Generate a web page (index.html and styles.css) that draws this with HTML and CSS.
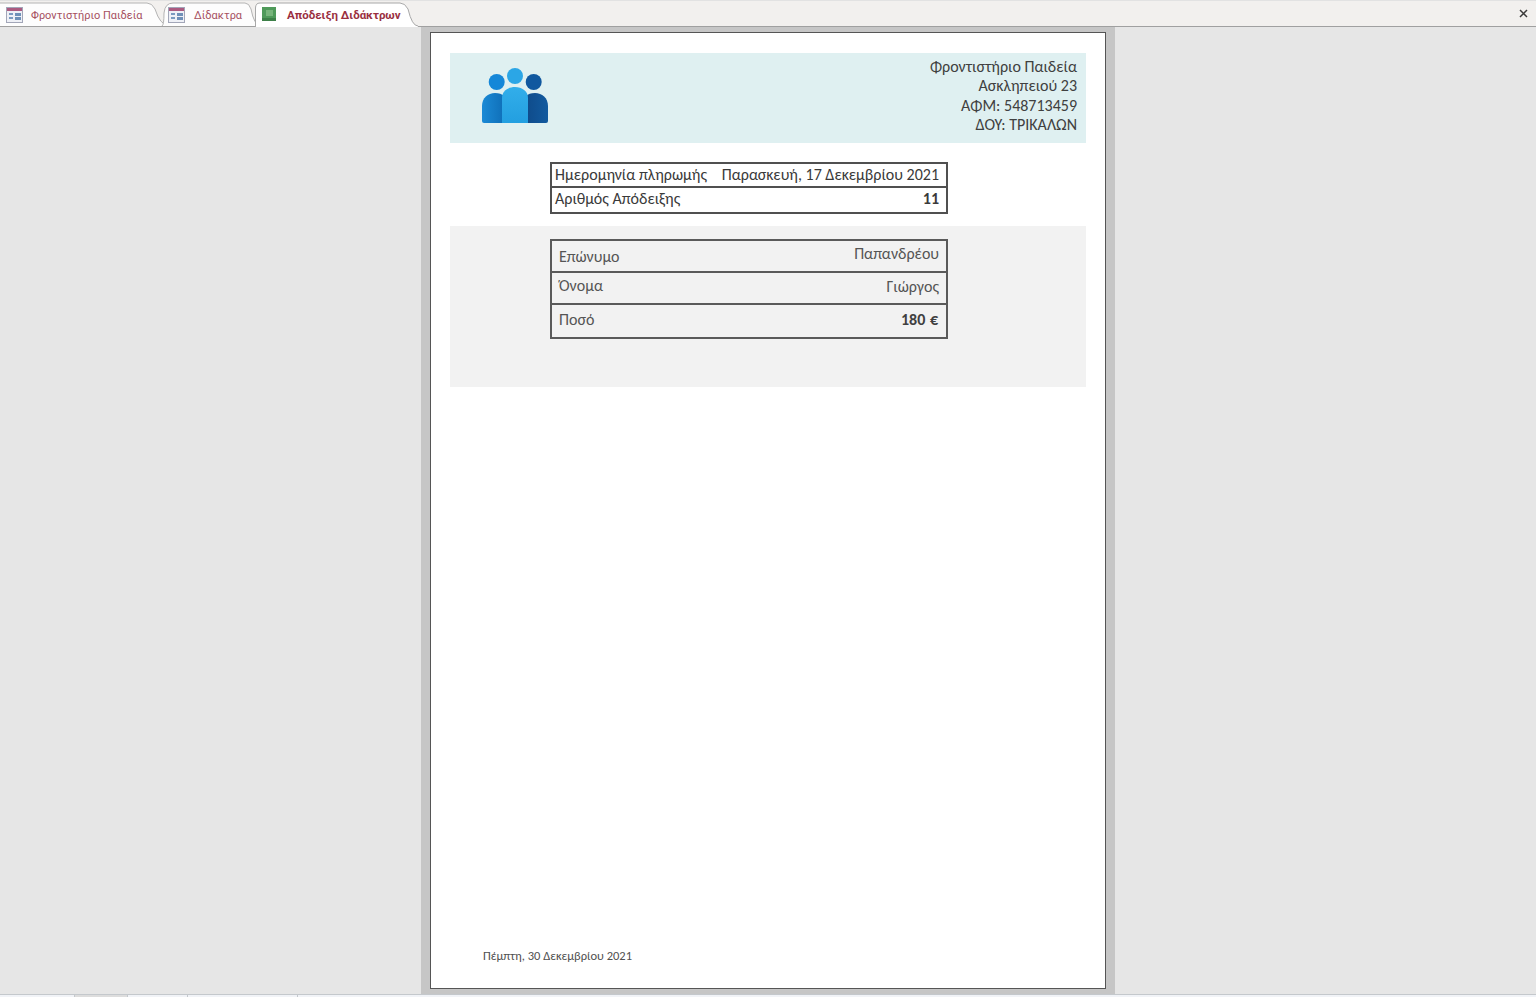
FILE: index.html
```html
<!DOCTYPE html>
<html lang="el">
<head>
    <meta charset="UTF-8">
    <title>Απόδειξη Διδάκτρων</title>
    <link rel="stylesheet" href="styles.css">
</head>
<body>
    <div class="tabbar">
        <div class="tab">
            <svg class="tab-shape" viewBox="0 0 164 25"><path d="M0 25V2H147Q152 2 155 8Q160 24 168 24V25Z" fill="#fdfdfd"/><path d="M0 2H147Q152 2 155 8Q160 24 168 24" fill="none" stroke="#b4b4b4"/></svg>
            <svg class="tab-icon" viewBox="0 0 17 16"><rect x="0.5" y="0.5" width="16" height="15" fill="#eef0f6" stroke="#a2a6b8"/><rect x="1" y="1" width="15" height="3" fill="#ab5a80"/><rect x="3" y="6" width="4" height="2" fill="#7a9ac0"/><rect x="3" y="10" width="4" height="2" fill="#7a9ac0"/><rect x="9" y="6" width="6" height="3" fill="#6f90b8"/><rect x="9" y="10" width="6" height="3" fill="#6f90b8"/></svg>
            <span class="tab-text">Φροντιστήριο Παιδεία</span>
        </div>
        <div class="tab tab-short">
            <svg class="tab-shape" viewBox="0 0 95 25"><path d="M0 25Q2 24 2 12Q3 2 11 2H83Q87 2 89 8Q92 24 98 24V25Z" fill="#fdfdfd"/><path d="M0 25Q2 24 2 12Q3 2 11 2H83Q87 2 89 8Q92 24 98 24" fill="none" stroke="#b4b4b4"/></svg>
            <svg class="tab-icon" viewBox="0 0 17 16"><rect x="0.5" y="0.5" width="16" height="15" fill="#eef0f6" stroke="#a2a6b8"/><rect x="1" y="1" width="15" height="3" fill="#ab5a80"/><rect x="3" y="6" width="4" height="2" fill="#7a9ac0"/><rect x="3" y="10" width="4" height="2" fill="#7a9ac0"/><rect x="9" y="6" width="6" height="3" fill="#6f90b8"/><rect x="9" y="10" width="6" height="3" fill="#6f90b8"/></svg>
            <span class="tab-text">Δίδακτρα</span>
        </div>
        <div class="tab tab-active">
            <svg class="tab-shape" viewBox="0 0 157 26"><path d="M0 26V7Q0 2 5 2H145Q150 2 153 8Q157 25 163 25V26Z" fill="#ffffff"/><path d="M0.5 26V7Q0.5 2 5 2H145Q150 2 153 8Q157 25 163 25" fill="none" stroke="#a8a8a8"/></svg>
            <svg class="tab-icon tab-icon-report" viewBox="0 0 14 14"><rect width="14" height="14" fill="#4f9a5a"/><rect x="4" y="3" width="7" height="6" fill="#78b57c"/><path d="M0 11h14v3H0z" fill="#3d8048"/></svg>
            <span class="tab-text">Απόδειξη Διδάκτρων</span>
        </div>
        <svg class="close" viewBox="0 0 9 9"><path d="M1 1L8 8M8 1L1 8" stroke="#3a3a3a" stroke-width="1.5" fill="none"/></svg>
    </div>

    <div class="workspace">
        <div class="page-shadow">
            <div class="page">
                <div class="header-band">
                    <svg class="logo" viewBox="0 0 66 55">
                        <defs>
                            <linearGradient id="side-left" x1="0" x2="1" y1="0" y2="0"><stop offset="0" stop-color="#1b8ad6"/><stop offset="1" stop-color="#0f6fb8"/></linearGradient>
                            <linearGradient id="middle" x1="0" x2="0" y1="0" y2="1"><stop offset="0" stop-color="#32aeea"/><stop offset="1" stop-color="#239fe0"/></linearGradient>
                            <linearGradient id="side-right" x1="0" x2="1" y1="0" y2="0"><stop offset="0" stop-color="#0f4b8a"/><stop offset="1" stop-color="#125a9f"/></linearGradient>
                        </defs>
                        <circle cx="14.7" cy="14" r="8" fill="#1587d8"/>
                        <circle cx="51.7" cy="14" r="8" fill="#10589f"/>
                        <circle cx="33" cy="8" r="8" fill="#2ba6e6"/>
                        <path d="M0 53V38C0 30 6 25 13 25C17 25 20 26 22 28V55H2Q0 55 0 53Z" fill="url(#side-left)"/>
                        <path d="M66 53V38C66 30 60 25 53 25C49 25 46 26 44 28V55H64Q66 55 66 53Z" fill="url(#side-right)"/>
                        <path d="M20 55V30C20 23 26 19 33 19C40 19 46 23 46 30V55Z" fill="url(#middle)"/>
                    </svg>
                    <div class="address">
                        <div>Φροντιστήριο Παιδεία</div>
                        <div>Ασκληπειού 23</div>
                        <div>ΑΦΜ: 548713459</div>
                        <div>ΔΟΥ: ΤΡΙΚΑΛΩΝ</div>
                    </div>
                </div>

                <div class="receipt-box">
                    <div class="row row-date">
                        <span>Ημερομηνία πληρωμής</span>
                        <span>Παρασκευή, 17 Δεκεμβρίου 2021</span>
                    </div>
                    <div class="row row-number">
                        <span>Αριθμός Απόδειξης</span>
                        <b>11</b>
                    </div>
                </div>

                <div class="detail-band">
                    <div class="detail-box">
                        <div class="row">
                            <span>Επώνυμο</span>
                            <span class="nudge-up">Παπανδρέου</span>
                        </div>
                        <div class="row">
                            <span class="nudge-up">Όνομα</span>
                            <span class="nudge-slight">Γιώργος</span>
                        </div>
                        <div class="row row-amount">
                            <span class="nudge-slight">Ποσό</span>
                            <b class="nudge-slight">180 €</b>
                        </div>
                    </div>
                </div>

                <div class="footer-date">Πέμπτη, 30 Δεκεμβρίου 2021</div>
            </div>
        </div>
    </div>

    <div class="statusbar">
        <div class="status-cell status-a"></div>
        <div class="status-cell status-b"></div>
        <div class="status-cell status-c"></div>
        <div class="status-cell status-d"></div>
    </div>
</body>
</html>
```

FILE: styles.css
```css
body {
    margin: 0;
    height: 997px;
    overflow: hidden;
    display: flex;
    flex-direction: column;
    font-family: Carlito, Lato, "Open Sans", "Liberation Sans", sans-serif;
    background-color: #e6e6e6;
    color: #404040;
}

/* tabs */
.tabbar {
    height: 25px;
    flex: none;
    display: flex;
    align-items: flex-end;
    background-color: #f2f0ee;
    border-top: 1px solid #e2e2e2;
    border-bottom: 1px solid #a0a0a0;
}
.tab {
    position: relative;
    width: 162px;
    height: 25px;
    box-sizing: border-box;
    display: flex;
    align-items: center;
    padding: 2px 0 0 6px;
    gap: 8px;
    font-family: Roboto, "Noto Sans", sans-serif;
    font-size: 11px;
    color: #a6505f;
}
.tab-short {
    width: 93px;
    gap: 9px;
}
.tab-active {
    width: 155px;
    height: 26px;
    margin-bottom: -1px;
    padding: 1px 0 1px 7px;
    gap: 11px;
    font-size: 11.5px;
    font-weight: 700;
    color: #9a2f3f;
}
.tab-shape {
    position: absolute;
    left: 0;
    top: 0;
    width: calc(100% + 2px);
    height: 100%;
    overflow: visible;
}
.tab-icon,
.tab-text {
    position: relative;
}
.tab-text {
    padding-top: 2px;
}
.tab-icon {
    width: 17px;
    height: 16px;
    flex: none;
}
.tab-icon-report {
    width: 14px;
    height: 14px;
}
.close {
    width: 9px;
    height: 9px;
    margin-left: auto;
    margin-right: 8px;
    align-self: center;
}

/* report area */
.workspace {
    flex: 1;
    min-height: 0;
    display: flex;
    justify-content: center;
}
.page-shadow {
    width: 694px;
    padding: 5px 9px 5px 9px;
    box-sizing: border-box;
    background-color: #c6c6c6;
}
.page {
    height: 100%;
    box-sizing: border-box;
    display: flex;
    flex-direction: column;
    padding: 20px 19px 0 19px;
    background-color: #ffffff;
    border: 1px solid #555555;
}
.header-band {
    height: 90px;
    flex: none;
    display: flex;
    justify-content: space-between;
    padding: 3.9px 9px 0 32px;
    box-sizing: border-box;
    background-color: #dff0f1;
}
.logo {
    width: 66px;
    height: 55px;
    margin-top: 11px;
}
.address {
    text-align: right;
    font-size: 16px;
    line-height: 19.5px;
}

.receipt-box,
.detail-box {
    width: 398px;
    box-sizing: border-box;
    margin-left: 100px;
    border: 2px solid #505050;
    font-size: 16px;
    color: #3a3a3a;
}
.receipt-box {
    margin-top: 19px;
    margin-bottom: 12px;
}
.row {
    display: flex;
    justify-content: space-between;
    padding: 0 7px 0 3px;
    box-sizing: border-box;
}
.row-date {
    height: 24px;
    line-height: 22px;
    border-bottom: 2px solid #505050;
}
.row-number {
    height: 24px;
    line-height: 21px;
}

.detail-band {
    height: 161px;
    flex: none;
    padding-top: 13px;
    box-sizing: border-box;
    background-color: #f2f2f2;
}
.detail-box {
    color: #555555;
    border-color: #5a5a5a;
}
.detail-box .row {
    padding: 0 7px;
    height: 32px;
    border-bottom: 2px solid #5a5a5a;
    align-items: center;
}
.detail-box .row-amount {
    border-bottom: none;
}
.nudge-up {
    padding-bottom: 6px;
}
.nudge-slight {
    padding-bottom: 4px;
}
.row-amount b {
    margin-right: 1px;
    word-spacing: 1px;
    color: #404040;
}

.footer-date {
    margin-top: auto;
    margin-bottom: 25px;
    margin-left: 33px;
    font-size: 12.5px;
    color: #505050;
}

/* bottom strip */
.statusbar {
    height: 3px;
    flex: none;
    box-sizing: border-box;
    display: flex;
    background-color: #f1f3f7;
    border-top: 1px solid #c4c8cc;
}
.status-cell {
    box-sizing: border-box;
    border-right: 1px solid #c4c8cc;
}
.status-a { width: 75px; }
.status-b { width: 53px; background-color: #dddddd; }
.status-c { width: 60px; }
.status-d { width: 110px; }
```
